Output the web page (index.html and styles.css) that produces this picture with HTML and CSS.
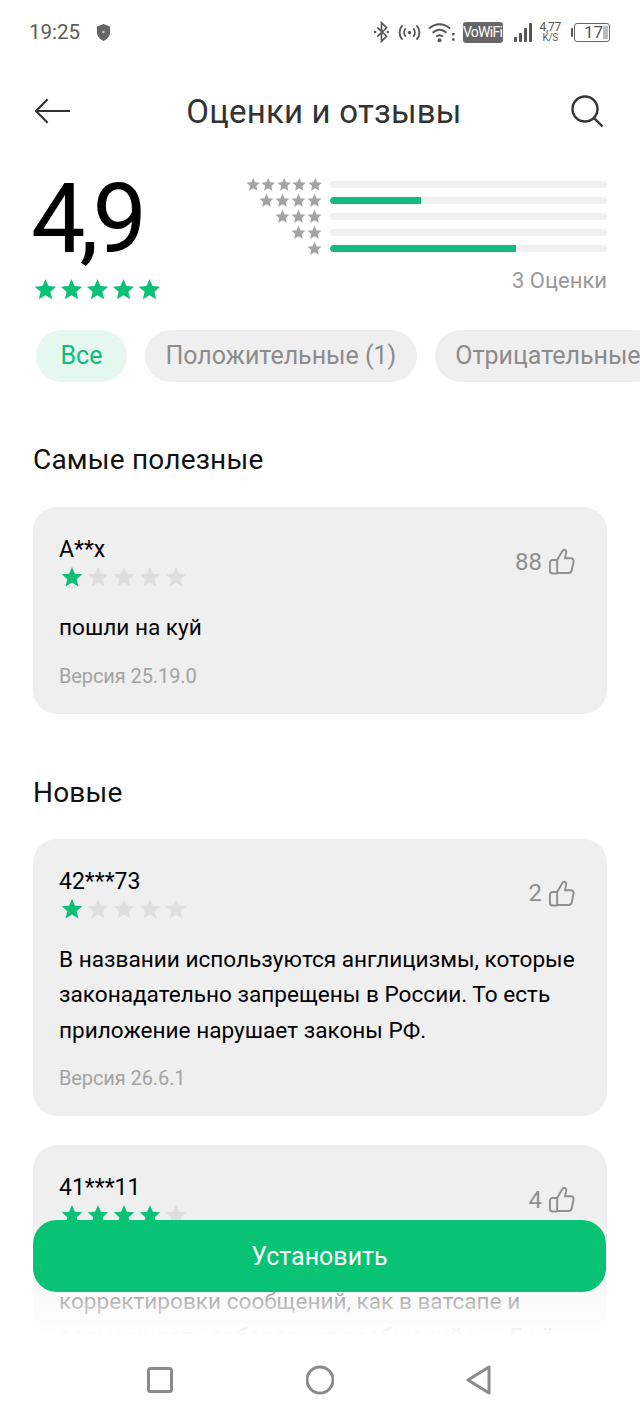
FILE: index.html
```html
<!DOCTYPE html>
<html lang="ru">
<head>
    <meta charset="UTF-8">
    <meta name="viewport" content="width=device-width, initial-scale=1.0">
    <title>Оценки и отзывы</title>
    <link rel="stylesheet" href="styles.css">
</head>
<body>
    <svg class="defs" width="0" height="0">
        <symbol id="star" viewBox="0 0 24 24">
            <path d="M12 1l3.2 7.4 8 .7-6.1 5.3 1.9 7.9L12 18.1l-7 4.2 1.9-7.9L.8 9.1l8-.7z"/>
        </symbol>
        <symbol id="thumb" viewBox="0 0 28 28">
            <path d="M9.5 12.5 14.6 3.6c.7-1.2 1.8-1.9 2.8-1.6 1.3.4 1.7 1.7 1.4 3.1l-1.2 5.6h6.2c1.9 0 3.1 1.6 2.7 3.4l-1.9 9c-.4 1.8-1.7 2.9-3.5 2.9H9.5zM9.5 12.5H4.8c-1.7 0-2.8 1.2-2.8 2.9v8.1c0 1.7 1.1 2.9 2.8 2.9h4.7"/>
        </symbol>
    </svg>

    <div class="status-bar">
        <span class="clock">19:25</span>
        <svg class="shield" viewBox="0 0 16 18"><path d="M8 0l7 2.5v6c0 4.4-3 7.7-7 9.5-4-1.8-7-5.1-7-9.5v-6z"/><circle cx="8" cy="8.500" r="1.300" fill="#ccc"/></svg>
        <div class="status-icons">
            <svg class="ic-bt" viewBox="0 0 20 24"><path d="M5 6.500l11 10.500-6 6V1l6 6L5 17.500"/><circle cx="2.500" cy="12" r="1.500" class="dot"/><circle cx="17.500" cy="12" r="1.500" class="dot"/></svg>
            <svg class="ic-hotspot" viewBox="0 0 24 18"><circle cx="12" cy="9" r="1.800" class="dot"/><path d="M8 4.500c-2.200 2.600-2.200 6.400 0 9M16 4.500c2.200 2.600 2.200 6.400 0 9M4.500 1.500c-4 4.300-4 10.700 0 15M19.500 1.500c4 4.300 4 10.700 0 15"/></svg>
            <svg class="ic-wifi" viewBox="0 0 28 22"><path d="M1 7.500c6.800-6 15.200-6 22 0M4.800 11.800c4.500-4 9.900-4 14.400 0M8.500 15.800c2.300-2 4.700-2 7 0"/><circle cx="12" cy="19.500" r="2" class="dot"/><rect x="25" y="12" width="2.500" height="2.500" class="dot"/><rect x="25" y="17.500" width="2.500" height="2.500" class="dot"/></svg>
            <span class="vowifi">VoWiFi</span>
            <div class="signal"><i class="s1"></i><i class="s2"></i><i class="s3"></i><i class="s4"></i></div>
            <div class="speed"><span>4,77</span><span class="speed-unit">K/S</span></div>
            <div class="battery-cap"></div>
            <div class="battery"><span>17</span><i></i></div>
        </div>
    </div>

    <header class="top-bar">
        <svg class="ic-back" viewBox="0 0 36 26"><path d="M13 1 1 13l12 12M1 13h35"/></svg>
        <h1>Оценки и отзывы</h1>
        <svg class="ic-search" viewBox="0 0 33 33"><circle cx="14" cy="14" r="12.500"/><path d="M23.500 23.500l8 8"/></svg>
    </header>

    <section class="summary">
        <div class="score">
            <div class="score-num">4,9</div>
            <div class="stars stars-big">
                <svg><use href="#star"/></svg><svg><use href="#star"/></svg><svg><use href="#star"/></svg><svg><use href="#star"/></svg><svg><use href="#star"/></svg>
            </div>
        </div>
        <div class="breakdown">
            <div class="bar-row">
                <div class="mini-stars"><svg><use href="#star"/></svg><svg><use href="#star"/></svg><svg><use href="#star"/></svg><svg><use href="#star"/></svg><svg><use href="#star"/></svg></div>
                <div class="bar"></div>
            </div>
            <div class="bar-row">
                <div class="mini-stars"><svg><use href="#star"/></svg><svg><use href="#star"/></svg><svg><use href="#star"/></svg><svg><use href="#star"/></svg></div>
                <div class="bar"><div class="bar-fill" style="width: 33%"></div></div>
            </div>
            <div class="bar-row">
                <div class="mini-stars"><svg><use href="#star"/></svg><svg><use href="#star"/></svg><svg><use href="#star"/></svg></div>
                <div class="bar"></div>
            </div>
            <div class="bar-row">
                <div class="mini-stars"><svg><use href="#star"/></svg><svg><use href="#star"/></svg></div>
                <div class="bar"></div>
            </div>
            <div class="bar-row">
                <div class="mini-stars"><svg><use href="#star"/></svg></div>
                <div class="bar"><div class="bar-fill" style="width: 67%"></div></div>
            </div>
            <div class="total">3 Оценки</div>
        </div>
    </section>

    <nav class="chips">
        <span class="chip chip-active">Все</span>
        <span class="chip">Положительные (1)</span>
        <span class="chip">Отрицательные</span>
    </nav>

    <h2 class="section-title first">Самые полезные</h2>
    <article class="card">
        <div class="card-head">
            <div>
                <div class="author">A**x</div>
                <div class="stars stars-small">
                    <svg><use href="#star"/></svg><svg class="off"><use href="#star"/></svg><svg class="off"><use href="#star"/></svg><svg class="off"><use href="#star"/></svg><svg class="off"><use href="#star"/></svg>
                </div>
            </div>
            <div class="likes">88<svg class="ic-thumb"><use href="#thumb"/></svg></div>
        </div>
        <p class="review">пошли на куй</p>
        <div class="version">Версия 25.19.0</div>
    </article>

    <h2 class="section-title">Новые</h2>
    <article class="card">
        <div class="card-head">
            <div>
                <div class="author">42***73</div>
                <div class="stars stars-small">
                    <svg><use href="#star"/></svg><svg class="off"><use href="#star"/></svg><svg class="off"><use href="#star"/></svg><svg class="off"><use href="#star"/></svg><svg class="off"><use href="#star"/></svg>
                </div>
            </div>
            <div class="likes">2<svg class="ic-thumb"><use href="#thumb"/></svg></div>
        </div>
        <p class="review">В названии используются англицизмы, которые законадательно запрещены в России. То есть приложение нарушает законы РФ.</p>
        <div class="version">Версия 26.6.1</div>
    </article>

    <article class="card card-next">
        <div class="card-head">
            <div>
                <div class="author">41***11</div>
                <div class="stars stars-small">
                    <svg><use href="#star"/></svg><svg><use href="#star"/></svg><svg><use href="#star"/></svg><svg><use href="#star"/></svg><svg class="off"><use href="#star"/></svg>
                </div>
            </div>
            <div class="likes">4<svg class="ic-thumb"><use href="#thumb"/></svg></div>
        </div>
        <p class="review">корректировки сообщений, как в ватсапе и<br>возможность добавления сообщений к ... Ещё</p>
    </article>

    <div class="fade"></div>
    <button class="install">Установить</button>

    <div class="nav-bar">
        <svg class="ic-nav" viewBox="0 0 28 30"><rect x="2.500" y="3.500" width="23" height="23" rx="2"/></svg>
        <svg class="ic-nav" viewBox="0 0 28 30"><circle cx="14" cy="15" r="13"/></svg>
        <svg class="ic-nav" viewBox="0 0 28 30"><path d="M23 2 2 15l21 13z"/></svg>
    </div>
</body>
</html>
```

FILE: styles.css
```css
html, body {
    margin: 0;
    padding: 0;
}
body {
    position: relative;
    width: 640px;
    height: 1423px;
    overflow: hidden;
    background-color: #fff;
    font-family: Roboto, 'Noto Sans', sans-serif;
    color: #000;
}
.defs {
    position: absolute;
}

/* status bar */
.status-bar {
    display: flex;
    align-items: center;
    height: 64px;
    padding: 0 30px 0 29px;
    color: #555;
}
.clock {
    font-size: 20.500px;
    color: #5c5c5c;
}
.shield {
    width: 15px;
    height: 17px;
    margin-left: 16px;
    fill: #666;
}
.status-icons {
    display: flex;
    align-items: center;
    margin-left: auto;
}
.status-icons svg {
    fill: none;
    stroke: #555;
    stroke-width: 2;
}
.status-icons .dot {
    fill: #555;
    stroke: none;
}
.ic-bt {
    width: 17px;
    height: 22px;
}
.ic-hotspot {
    width: 23px;
    height: 17px;
    margin-left: 8px;
}
.ic-wifi {
    width: 27px;
    height: 22px;
    margin-left: 7px;
}
.vowifi {
    width: 40px;
    height: 21px;
    margin-left: 8px;
    border-radius: 3px;
    background-color: #666;
    color: #fff;
    font-size: 14px;
    line-height: 21px;
    text-align: center;
    letter-spacing: -0.7px;
}
.signal {
    display: flex;
    align-items: flex-end;
    gap: 2px;
    height: 20px;
    margin-left: 11px;
}
.signal i {
    width: 3px;
    background-color: #555;
    border-radius: 1px;
}
.s1 { height: 5px; }
.s2 { height: 9px; }
.s3 { height: 14px; }
.s4 { height: 19px; }
.speed {
    display: flex;
    flex-direction: column;
    align-items: center;
    margin-left: 8px;
    font-size: 12px;
    line-height: 11px;
    letter-spacing: -0.3px;
}
.speed-unit {
    font-size: 10px;
    line-height: 9px;
}
.battery-cap {
    width: 2px;
    height: 9px;
    margin-left: 10px;
    background-color: #555;
    border-radius: 1px;
}
.battery {
    display: flex;
    align-items: center;
    justify-content: space-between;
    box-sizing: border-box;
    width: 36px;
    height: 19px;
    margin-left: 1px;
    padding: 0 1px 0 9px;
    border: 1.5px solid #666;
    border-radius: 3px;
    font-size: 17px;
}
.battery i {
    width: 5px;
    height: 13px;
    background-color: #bbb;
}

/* top bar */
.top-bar {
    display: flex;
    align-items: center;
    justify-content: space-between;
    height: 64px;
    margin: 15px 0 29px;
    padding: 0 36px 0 35px;
}
.top-bar h1 {
    margin: 0 0 0 7px;
    font-size: 33px;
    font-weight: 400;
    letter-spacing: 0.2px;
    color: #333;
}
.ic-back {
    width: 35px;
    height: 26px;
    fill: none;
    stroke: #333;
    stroke-width: 2.200;
}
.ic-search {
    width: 33px;
    height: 33px;
    fill: none;
    stroke: #333;
    stroke-width: 2.400;
}

/* rating summary */
.summary {
    display: flex;
    justify-content: space-between;
    height: 158px;
    padding: 0 33px;
}
.score-num {
    height: 106px;
    margin-left: -2px;
    font-size: 97px;
    line-height: 94px;
    letter-spacing: -6px;
}
.stars {
    display: flex;
}
.stars svg {
    fill: #0cc076;
}
.stars .off {
    fill: #dedede;
}
.stars-big {
    margin-left: 1px;
    gap: 3px;
}
.stars-big svg {
    width: 23px;
    height: 23px;
}
.breakdown {
    width: 362px;
    padding-top: 4px;
}
.bar-row {
    display: flex;
    align-items: center;
    height: 16px;
}
.mini-stars {
    display: flex;
    justify-content: flex-end;
    width: 77px;
    flex-shrink: 0;
}
.mini-stars svg {
    width: 15px;
    height: 15px;
    margin-left: 1px;
    fill: #a3a3a3;
}
.bar {
    flex: 1;
    height: 7px;
    margin-left: 8px;
    border-radius: 4px;
    background-color: #f0f0f0;
    overflow: hidden;
}
.bar-fill {
    height: 100%;
    background-color: #0fbb7e;
    border-radius: 4px 0 0 4px;
}
.total {
    margin-top: 12px;
    text-align: right;
    font-size: 22px;
    color: #999;
}

/* filter chips */
.chips {
    display: flex;
    gap: 18px;
    padding-left: 36px;
    white-space: nowrap;
    overflow: hidden;
}
.chip {
    flex-shrink: 0;
    height: 52px;
    padding: 0 20.500px;
    border-radius: 26px;
    background-color: #efefef;
    color: #8c8c8c;
    font-size: 25px;
    line-height: 52px;
}
.chip-active {
    padding: 0 24.500px;
    background-color: #e5f8f0;
    color: #10bd76;
}

/* reviews */
.section-title {
    margin: 0;
    padding: 61px 33px 0;
    height: 64px;
    font-size: 28px;
    font-weight: 400;
    line-height: 36px;
    letter-spacing: 0.2px;
    color: #111;
}
.section-title.first {
    padding-top: 60px;
    height: 65px;
}
.card {
    margin: 0 33px;
    padding: 28px 32px 23px 26px;
    border-radius: 24px;
    background-color: #efefef;
}
.card-next {
    margin-top: 29px;
}
.card-next .review {
    padding-top: 35.500px;
}
.card-head {
    display: flex;
    align-items: center;
    justify-content: space-between;
}
.author {
    font-size: 23px;
    line-height: 30px;
}
.stars-small {
    gap: 4px;
    margin-top: 1px;
    margin-left: 2px;
}
.stars-small svg {
    width: 22px;
    height: 22px;
}
.likes {
    display: flex;
    align-items: center;
    gap: 6px;
    font-size: 24px;
    color: #8f8f8f;
}
.ic-thumb {
    width: 27px;
    height: 27px;
    fill: none;
    stroke: #8f8f8f;
    stroke-width: 2;
}
.review {
    margin: 22px 0 0;
    font-size: 22.600px;
    line-height: 35.500px;
}
.version {
    margin-top: 15px;
    font-size: 20px;
    line-height: 30px;
    letter-spacing: -0.1px;
    color: #a3a3a3;
}

/* bottom overlays */
.fade {
    position: absolute;
    left: 0;
    right: 0;
    top: 1220px;
    height: 115px;
    background: linear-gradient(rgba(255, 255, 255, 0), #fff);
}
.install {
    position: absolute;
    left: 33px;
    top: 1220px;
    width: 573px;
    height: 72px;
    border: none;
    border-radius: 24px;
    background-color: #07c373;
    color: #fff;
    font-family: inherit;
    font-size: 25px;
}
.nav-bar {
    position: absolute;
    left: 0;
    right: 0;
    top: 1335px;
    bottom: 0;
    display: flex;
    justify-content: center;
    gap: 132px;
    padding-top: 30px;
    background-color: #fff;
}
.ic-nav {
    width: 28px;
    height: 30px;
    fill: none;
    stroke: #8a8a8a;
    stroke-width: 3;
    stroke-linejoin: round;
}
```
